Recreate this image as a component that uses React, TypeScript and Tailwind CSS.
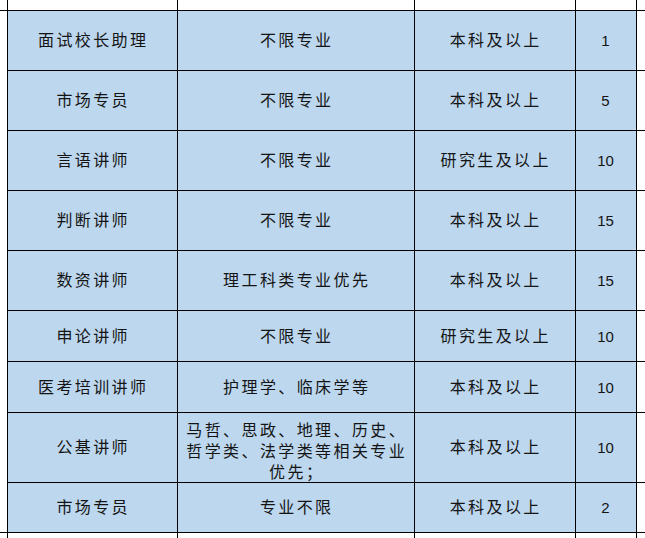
import React from 'react';

type Row = { title: string; major: React.ReactNode; edu: string; count: string; h: string; multi?: boolean };

const rows: Row[] = [
  { title: '面试校长助理', major: '不限专业', edu: '本科及以上', count: '1', h: 'h-[60px]' },
  { title: '市场专员', major: '不限专业', edu: '本科及以上', count: '5', h: 'h-[60px]' },
  { title: '言语讲师', major: '不限专业', edu: '研究生及以上', count: '10', h: 'h-[60px]' },
  { title: '判断讲师', major: '不限专业', edu: '本科及以上', count: '15', h: 'h-[60px]' },
  { title: '数资讲师', major: '理工科类专业优先', edu: '本科及以上', count: '15', h: 'h-[60px]' },
  { title: '申论讲师', major: '不限专业', edu: '研究生及以上', count: '10', h: 'h-[51px]' },
  { title: '医考培训讲师', major: '护理学、临床学等', edu: '本科及以上', count: '10', h: 'h-[51px]' },
  {
    title: '公基讲师',
    major: (
      <>
        马哲、思政、地理、历史、
        <br />
        哲学类、法学类等相关专业
        <br />
        优先；
      </>
    ),
    edu: '本科及以上',
    count: '10',
    h: 'h-[70px]',
    multi: true,
  },
  { title: '市场专员', major: '专业不限', edu: '本科及以上', count: '2', h: 'h-[50px]' },
];

const cjk = "font-['Noto_Sans_CJK_SC','Noto_Sans',sans-serif]";
const cell = 'border border-black bg-[#bdd7ee] text-center align-middle p-0 text-[#141414]';
const label = `${cjk} text-[16px] tracking-[2.4px] pl-[2.4px] leading-none`;

export default function App() {
  return (
    <div className="w-[645px] h-[538px] overflow-hidden bg-white">
      <table className="table-fixed border-collapse w-[660px]">
        <colgroup>
          <col className="w-[7px]" />
          <col className="w-[170px]" />
          <col className="w-[237px]" />
          <col className="w-[161px]" />
          <col className="w-[61px]" />
          <col className="w-[24px]" />
        </colgroup>
        <tbody>
          {/* cut-off row above */}
          <tr className="h-[10px]">
            <td className="p-0" />
            <td className="p-0 border-x border-b border-black" />
            <td className="p-0 border-x border-b border-black" />
            <td className="p-0 border-x border-b border-black" />
            <td className="p-0 border-x border-b border-black" />
            <td className="p-0 border-b border-black" />
          </tr>
          {rows.map((r, i) => (
            <tr key={i} className={r.h}>
              <td
                className={`p-0 border-black ${i === 0 ? 'border-t' : ''} ${i === rows.length - 1 ? 'border-b' : ''}`}
              />
              <td className={cell}>
                <span className={label}>{r.title}</span>
              </td>
              <td className={cell}>
                {r.multi ? (
                  <div className={`${cjk} text-[16px] tracking-[2.4px] pl-[2.4px] pt-[6px] leading-[21px]`}>
                    {r.major}
                  </div>
                ) : (
                  <span className={label}>{r.major}</span>
                )}
              </td>
              <td className={cell}>
                <span className={label}>{r.edu}</span>
              </td>
              <td className={cell}>
                <span className="font-['Liberation_Sans',Arial,sans-serif] text-[15px] leading-none">{r.count}</span>
              </td>
              <td className="p-0 border-y border-black" />
            </tr>
          ))}
          {/* cut-off row below */}
          <tr className="h-[12px]">
            <td className="p-0" />
            <td className="p-0 border-x border-t border-black" />
            <td className="p-0 border-x border-t border-black" />
            <td className="p-0 border-x border-t border-black" />
            <td className="p-0 border-x border-t border-black" />
            <td className="p-0" />
          </tr>
        </tbody>
      </table>
    </div>
  );
}
